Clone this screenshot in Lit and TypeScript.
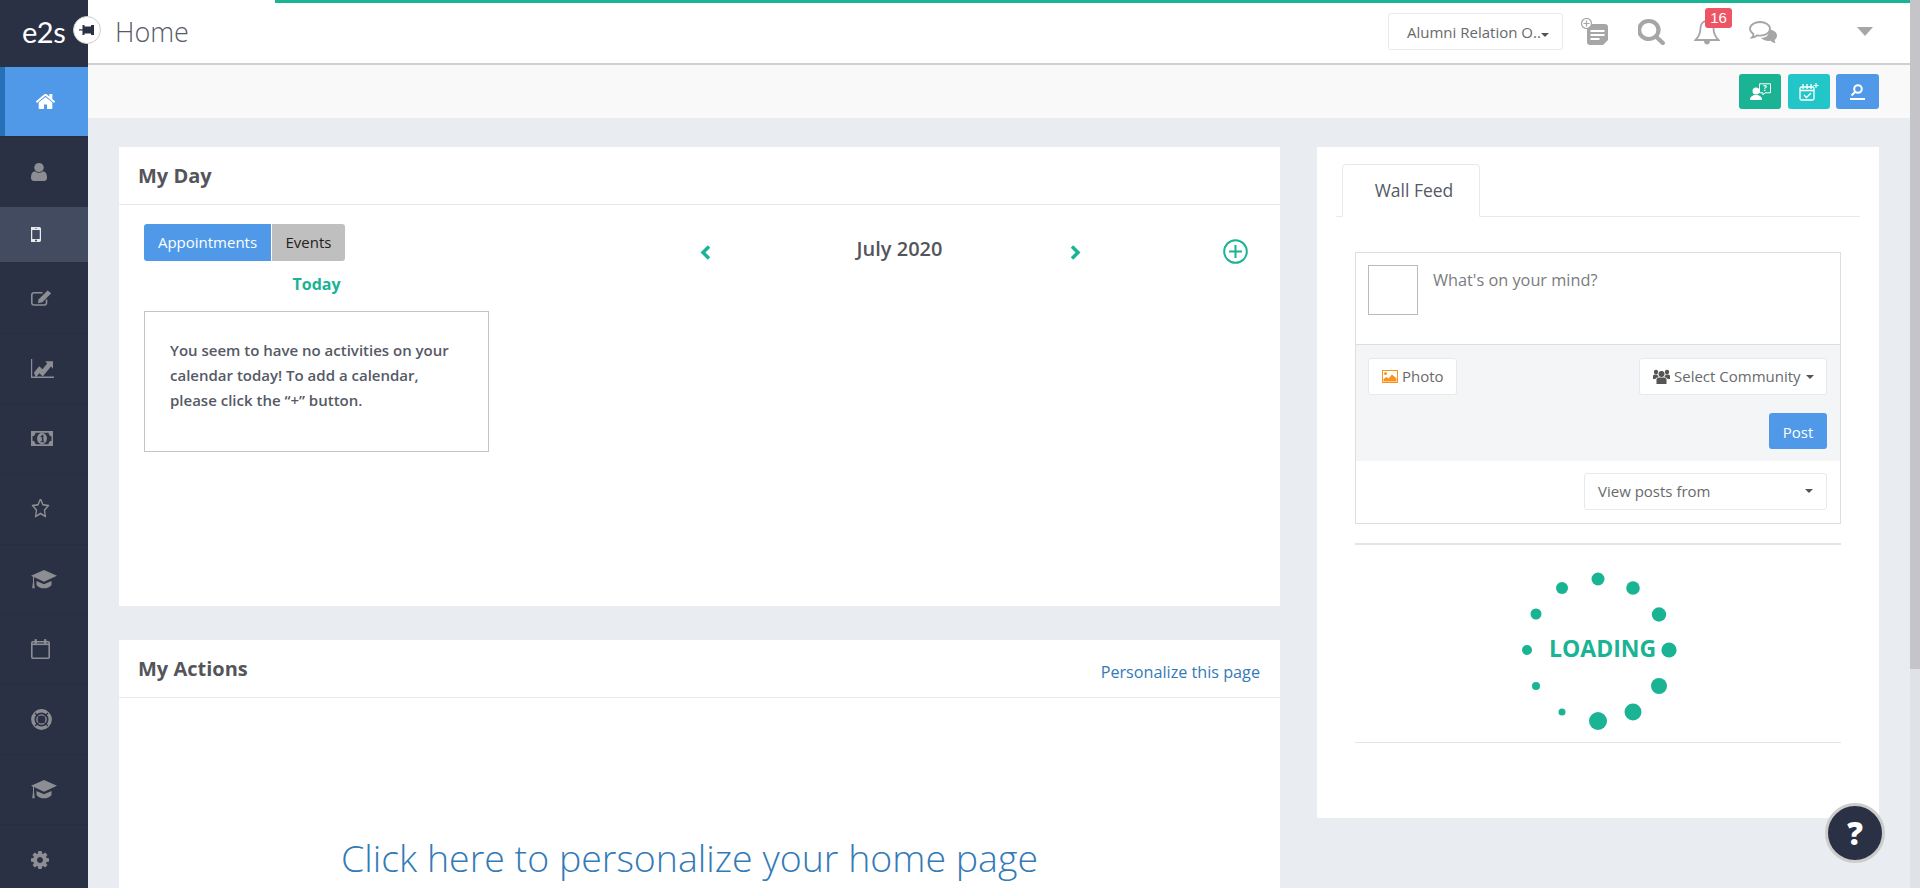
import { LitElement, html, css, svg } from "lit";
import { customElement } from "lit/decorators.js";

const fa = (d: string) => svg`<path fill="currentColor" d=${d}></path>`;
const P = {
  home: "M1472 992v480q0 26-19 45t-45 19h-384v-384h-256v384h-384q-26 0-45-19t-19-45v-480q0-1 .5-3t.5-3l575-474 575 474q1 2 1 6zm223-69l-62 74q-8 9-21 11h-3q-13 0-21-7l-692-577-692 577q-12 8-24 7-13-2-21-11l-62-74q-8-10-7-23.5t11-21.5l719-599q32-26 76-26t76 26l244 204v-195q0-14 9-23t23-9h192q14 0 23 9t9 23v408l219 182q10 8 11 21.5t-7 23.5z",
  user: "M1536 1399q0 109-62.5 187t-150.5 78h-854q-88 0-150.5-78t-62.5-187q0-85 8.5-160.5t31.5-152 58.5-131 94-89 134.5-34.5q131 128 313 128t313-128q76 0 134.5 34.5t94 89 58.5 131 31.5 152 8.5 160.5zm-256-887q0 159-112.5 271.5t-271.5 112.5-271.5-112.5-112.5-271.5 112.5-271.5 271.5-112.5 271.5 112.5 112.5 271.5z",
  mobile: "M976 1408q0-33-23.5-56.5t-56.5-23.5-56.5 23.5-23.5 56.5 23.5 56.5 56.5 23.5 56.5-23.5 23.5-56.5zm208-160v-704q0-13-9.5-22.5t-22.5-9.5h-512q-13 0-22.5 9.5t-9.5 22.5v704q0 13 9.5 22.5t22.5 9.5h512q13 0 22.5-9.5t9.5-22.5zm-192-848q0-16-16-16h-160q-16 0-16 16t16 16h160q16 0 16-16zm288-16v1024q0 52-38 90t-90 38h-640q-52 0-90-38t-38-90v-1024q0-52 38-90t90-38h640q52 0 90 38t38 90z",
  star: "M1201 1004l306-297-422-62-189-382-189 382-422 62 306 297-73 421 378-199 377 199zm527-357q0 22-26 48l-363 354 86 500q1 7 1 20 0 50-41 50-19 0-40-12l-449-236-449 236q-22 12-40 12-21 0-31.5-14.5t-10.5-35.5q0-6 2-20l86-500-364-354q-25-27-25-48 0-37 56-46l502-73 225-455q19-41 49-41t49 41l225 455 502 73q56 9 56 46z",
  cog: "M1152 896q0-106-75-181t-181-75-181 75-75 181 75 181 181 75 181-75 75-181zm512-109v222q0 12-8 23t-20 13l-185 28q-19 54-39 91 35 50 107 138 10 12 10 25t-9 23q-27 37-99 108t-94 71q-12 0-26-9l-138-108q-44 23-91 38-16 136-29 186-7 28-36 28h-222q-14 0-24.5-8.5t-11.5-21.5l-28-184q-49-16-90-37l-141 107q-10 9-25 9-14 0-25-11-126-114-165-168-7-10-7-23 0-12 8-23 15-21 51-66.5t54-70.5q-27-50-41-99l-183-27q-13-2-21-12.5t-8-23.5v-222q0-12 8-23t19-13l186-28q14-46 39-92-40-57-107-138-10-12-10-24 0-10 9-23 26-36 98.5-107.5t94.5-71.5q13 0 26 10l138 107q44-23 91-38 16-136 29-186 7-28 36-28h222q14 0 24.5 8.5t11.5 21.5l28 184q49 16 90 37l142-107q9-9 24-9 13 0 25 10 129 119 165 170 7 8 7 22 0 12-8 23-15 21-51 66.5t-54 70.5q26 50 41 98l183 28q13 2 21 12.5t8 23.5z",
  search: "M1216 832q0-185-131.5-316.5t-316.5-131.5-316.5 131.5-131.5 316.5 131.5 316.5 316.5 131.5 316.5-131.5 131.5-316.5zm512 832q0 52-38 90t-90 38q-54 0-90-38l-343-342q-179 124-399 124-143 0-273.5-55.5t-225-150-150-225-55.5-273.5 55.5-273.5 150-225 225-150 273.5-55.5 273.5 55.5 225 150 150 225 55.5 273.5q0 220-124 399l343 343q37 37 37 90z",
};
const capIcon = svg`<path fill="currentColor" d="M0 5.600 13 1l13 4.600-13 4.600L3 6.600v3.600l.8 5.200H1.200L2 10.200V6.300z"/><path fill="currentColor" d="M5.500 9.600 13 12.200l7.500-2.600v3.200c-1.700 1.800-4.400 2.700-7.500 2.700s-5.800-.9-7.500-2.700z"/>`;

const navIcons = [
  html`<svg width="19" height="15" viewBox="96 270 1600 1262" preserveAspectRatio="none">${fa(P.home)}</svg>`,
  html`<svg width="16" height="18" viewBox="256 128 1280 1536" preserveAspectRatio="none">${fa(P.user)}</svg>`,
  html`<svg width="10" height="15" viewBox="512 256 768 1280" preserveAspectRatio="none">${fa(P.mobile)}</svg>`,
  html`<svg width="21" height="16" viewBox="0 0 21 17" preserveAspectRatio="none"><path fill="none" stroke="currentColor" stroke-width="1.600" d="M15.500 10v3.600c0 1.400-.9 2.400-2.300 2.400H3.200C1.800 16 .8 15 .8 13.600V5.400C.8 4 1.800 3 3.200 3h8.300"/><path fill="currentColor" d="M16.600.4l3.600 3.100L11.400 13l-4.600 1.200.9-4.300z"/></svg>`,
  html`<svg width="23" height="19" viewBox="0 0 23 16" preserveAspectRatio="none"><path fill="currentColor" d="M0 0h1.200v14.800H23V16H0z"/><path fill="currentColor" d="M3 11.400 8.200 6l3.300 2.700 4.700-4.900-1.900-1.900H22v6.400l-2-2-8.300 8.400-3.300-2.800-3.600 3.700z"/></svg>`,
  html`<svg width="22" height="15" viewBox="0 0 22 13" preserveAspectRatio="none"><path fill="currentColor" fill-rule="evenodd" d="M0 0h22v13H0zM4.500 1.500c0 1.600-1.400 3-3 3v4c1.600 0 3 1.400 3 3h13c0-1.600 1.400-3 3-3v-4c-1.600 0-3-1.400-3-3z"/><circle cx="11" cy="6.500" r="4.900" fill="currentColor"/><path fill="#2b3144" d="M9.400 4.800 11.500 3.300h.9v5.500h1v1H9.600v-1h1.200V4.900l-1 .7z"/></svg>`,
  html`<svg width="19" height="19" viewBox="0 128 1792 1536" preserveAspectRatio="none">${fa(P.star)}</svg>`,
  html`<svg width="26" height="19" viewBox="0 1 26 15" preserveAspectRatio="none">${capIcon}</svg>`,
  html`<svg width="19" height="20" viewBox="0 0 19 20"><rect x=".8" y="2.800" width="17.400" height="16.400" rx="1" fill="none" stroke="currentColor" stroke-width="1.600"/><rect x="3.500" width="2.400" height="5" rx="1" fill="currentColor"/><rect x="13" width="2.400" height="5" rx="1" fill="currentColor"/><rect x="1" y="4.500" width="17" height="1.600" fill="currentColor"/></svg>`,
  html`<svg width="21" height="21" viewBox="0 0 21 21"><circle cx="10.500" cy="10.500" r="8.700" fill="none" stroke="currentColor" stroke-width="3.400"/><circle cx="10.500" cy="10.500" r="4.600" fill="none" stroke="currentColor" stroke-width="1.400"/><path stroke="#2b3144" stroke-width="1.200" d="M4 4l3.500 3.500M17 4l-3.500 3.500M4 17l3.500-3.500M17 17l-3.500-3.500"/></svg>`,
  html`<svg width="26" height="19" viewBox="0 1 26 15" preserveAspectRatio="none">${capIcon}</svg>`,
  html`<svg width="18" height="18" viewBox="128 128 1536 1536">${fa(P.cog)}</svg>`,
];

const dots: [number, number, number][] = [
  [70, 34, 6.5], [105, 43, 6.8], [131, 69.5, 7.2], [141, 105, 7.6], [131, 141, 8], [105, 167, 8.5],
  [70, 176, 9], [34, 167, 3.5], [8, 141, 4], [-1, 105, 5], [8, 69, 5.5], [34, 43, 6],
];

@customElement("app-root")
export class AppRoot extends LitElement {
  static styles = css`
    :host { display: block; height: 888px; overflow: hidden; font-family: "Open Sans", "Liberation Sans", sans-serif; color: #676a6c; }
    * { box-sizing: border-box; }
    .shell { display: flex; height: 888px; background: #e9ecf1; }
    .side { width: 88px; flex: none; background: #2b3144; color: #8c8e93; position: relative; z-index: 2; }
    .logo { height: 67px; padding: 14px 0 0 22px; color: #fff; font: 400 29px/36px Lato, "Open Sans", sans-serif; letter-spacing: -0.5px; }
    .pin { position: absolute; left: 73px; top: 16px; width: 28px; height: 28px; border-radius: 50%; background: #fff; border: 1px solid #ccc; display: flex; align-items: center; justify-content: center; color: #2b3144; }
    .items { display: grid; grid-template-rows: 69px 71px 55px 71px repeat(8, 70.2px); }
    .item { display: flex; align-items: center; padding-left: 31px; border-top: 1px solid #282d3f; }
    .item.active { background: #4f99e8; color: #fff; border-left: 5px solid #2670b8; border-top: none; padding-left: 31px; }
    .item.hi { background: #434b60; border-top: none; color: #e8e9ec; }
    .main { flex: 1; min-width: 0; display: flex; flex-direction: column; }
    .top { background: #fff; }
    .bar { height: 3px; margin-left: 187px; background: #1ab394; }
    .head { height: 60px; background: #fff; display: flex; align-items: center; padding-left: 27px; padding-right: 37px; color: #a6a6a6; }
    .head-border { height: 2px; background: #cfd0d2; }
    .title { font-size: 27px; font-weight: 300; color: #555a66; line-height: 36px; margin-right: auto; margin-top: -3px; }
    .org { position: relative; width: 175px; height: 37px; margin-top: -3px; border: 1px solid #e7eaec; border-radius: 3px; font-size: 15px; color: #676a6c; display: flex; align-items: center; padding-left: 18px; white-space: nowrap; }
    .caret-s { flex: none; width: 0; height: 0; border-left: 4.500px solid transparent; border-right: 4.500px solid transparent; border-top: 4.500px solid #555; }
    .org .caret-s { position: absolute; left: 152px; top: 19px; }
    .h-ic { flex: none; margin-top: -3px; }
    .ml18 { margin-left: 18px; } .ml30 { margin-left: 30px; } .ml29 { margin-left: 29px; } .ml79 { margin-left: 79px; }
    .bell { position: relative; display: flex; }
    .badge { position: absolute; left: 11px; top: -11px; width: 27px; height: 20px; border-radius: 3px; background: #ed5565; color: #fff; font: 400 15px/20px "Liberation Sans", sans-serif; text-align: center; }
    .sub { height: 53px; background: #f9f9f9; display: flex; align-items: center; justify-content: flex-end; gap: 7px; padding-right: 31px; }
    .abtn { width: 42px; height: 35px; border-radius: 3px; display: flex; align-items: center; justify-content: center; color: #fff; }
    .a1 { background: #1ab394; } .a2 { background: #23c6c8; } .a3 { background: #4f99e8; width: 43px; margin-left: -1px; }
    .content { flex: 1; display: flex; gap: 37px; padding: 29px 0 0 31px; min-height: 0; overflow: hidden; }
    .left { width: 1161px; flex: none; display: flex; flex-direction: column; gap: 34px; }
    .right { width: 562px; flex: none; }
    .card { background: #fff; }
    .card-h { height: 58px; border-bottom: 1px solid #e7eaec; padding: 0 20px 0 19px; display: flex; align-items: center; justify-content: space-between; font-size: 20px; font-weight: 700; color: #54555b; }
    .card-h a { font-size: 16.200px; font-weight: 400; color: #337ab7; padding-top: 7px; }
    .myday { height: 401px; display: flex; padding: 19px 0 0 25px; }
    .cal-l { width: 345px; flex: none; }
    .tabs { display: flex; gap: 1px; font-size: 15px; }
    .tab { height: 37px; line-height: 37px; text-align: center; }
    .t1 { width: 127px; background: #4f99e8; color: #fff; border-radius: 3px 0 0 3px; }
    .t2 { width: 73px; background: #bfbfbf; color: #222; border-radius: 0 3px 3px 0; }
    .today { text-align: center; font-size: 16px; font-weight: 700; color: #1ab394; height: 50px; line-height: 46px; width: 345px; }
    .empty { height: 141px; border: 1px solid #c4c4c4; padding: 26px 20px 0 25px; font-size: 15px; font-weight: 600; line-height: 25px; color: #555a66; }
    .nav { display: flex; align-items: flex-start; color: #1ab394; padding-top: 21px; margin-left: 211px; }
    .month { width: 359px; padding-left: 18px; text-align: center; font-size: 20px; font-weight: 600; color: #54555b; line-height: 26px; margin-top: -9px; }
    .nav .plus { margin-left: 142px; margin-top: -6px; }
    .actions { height: 300px; }
    .cta { text-align: center; font-size: 37.500px; font-weight: 300; color: #337ab7; padding: 135px 20px 0 0; line-height: 50px; }
    .wall { height: 671px; padding: 17px 19px 0 19px; }
    .wtabs { height: 53px; border-bottom: 1px solid #e7eaec; padding-left: 6px; display: flex; }
    .wtab { width: 138px; height: 53px; padding-left: 6px; border: 1px solid #e7eaec; border-bottom: 1px solid #fff; border-radius: 4px 4px 0 0; font-size: 17.500px; color: #555a66; text-align: center; line-height: 50px; }
    .post { margin: 35px 0 0 19px; width: 486px; height: 272px; border: 1px solid #dcdee0; display: flex; flex-direction: column; }
    .post-top { height: 92px; border-bottom: 1px solid #dcdee0; display: flex; padding: 12px 0 0 12px; }
    .avatar { width: 50px; height: 50px; border: 1px solid #bbb; flex: none; }
    .mind { margin-left: 15px; font-size: 16.300px; color: #7a7c80; line-height: 30px; }
    .post-mid { height: 116px; background: #f4f5f7; padding: 13px 13px 0 12px; }
    .row { display: flex; justify-content: space-between; }
    .wbtn { height: 37px; background: #fff; border: 1px solid #e7eaec; border-radius: 3px; display: flex; align-items: center; padding-bottom: 1px; font-size: 15px; color: #676a6c; }
    .photo { width: 89px; padding-left: 13px; gap: 4px; }
    .sel { width: 188px; padding-left: 13px; gap: 4px; white-space: nowrap; }
    .sel .caret-s { margin-left: 1px; margin-top: 1px; }
    .postbtn { width: 58px; height: 36px; margin: 18px 0 0 auto; background: #4f99e8; color: #fff; border-radius: 3px; font-size: 15px; text-align: center; line-height: 38px; }
    .post-bot { padding: 12px 13px 0 0; display: flex; justify-content: flex-end; }
    .view { width: 243px; padding-left: 13px; padding-right: 13px; justify-content: space-between; }
    .loading-wrap { margin: 19px 0 0 19px; width: 486px; height: 200px; border-top: 2px solid #e2e4e6; border-bottom: 1px solid #e2e4e6; }
    .loader { position: relative; width: 140px; height: 196px; margin-left: 173px; color: #1ab394; }
    .loader svg { position: absolute; left: 0; top: 0; overflow: visible; }
    .loader b { position: absolute; left: 21px; top: 88px; font-size: 23px; line-height: 30px; font-weight: 700; }
    .scroll { width: 10px; flex: none; background: #e0e2e7; }
    .thumb { height: 669px; background: #c5c5c9; }
    .help { position: absolute; left: 1825px; top: 803px; width: 60px; height: 60px; border-radius: 50%; background: #2b3144; border: 3px solid #ccc; color: #fff; font: 800 31px/54px "Open Sans", sans-serif; text-align: center; z-index: 3; }
  `;

  render() {
    return html`<div class="shell">
      <aside class="side">
        <div class="logo">e2s</div>
        <div class="pin"><svg width="16" height="10" viewBox="0 0 16 10"><path fill="currentColor" d="M0 4.300h3.500V0h2v1.500H12V0h3v10h-3V8.500H5.500V10h-2V5.500H0z"/></svg></div>
        <div class="items">
          ${navIcons.map((ic, i) => html`<div class="item ${i === 0 ? "active" : ""} ${i === 2 ? "hi" : ""}">${ic}</div>`)}
        </div>
      </aside>
      <div class="main">
        <div class="top"><div class="bar"></div></div>
        <header class="head">
          <div class="title">Home</div>
          <div class="org">Alumni Relation O..<span class="caret-s"></span></div>
          <svg class="h-ic ml18" width="27" height="27" viewBox="0 0 27 27"><path fill="currentColor" d="M6 6h18c1.500 0 3 1.300 3 3v13l-5 5H9c-1.700 0-3-1.300-3-3z"/><path stroke="#fff" stroke-width="2" d="M9.500 13h14M9.500 17h14M9.500 21h9"/><circle cx="5.500" cy="5.500" r="5" fill="#fff" stroke="currentColor" stroke-width="1.200"/><path stroke="currentColor" stroke-width="1.200" d="M5.500 2.500v6M2.500 5.500h6"/></svg>
          <svg class="h-ic ml30" width="27" height="26" viewBox="128 128 1600 1664" preserveAspectRatio="none">${fa(P.search)}</svg>
          <div class="h-ic ml29 bell">
            <svg width="26" height="26" viewBox="0 0 26 26"><path fill="none" stroke="currentColor" stroke-width="1.800" d="M13 2c-4 0-6.500 3-6.500 7 0 6-2 9-5 12h23c-3-3-5-6-5-12 0-4-2.500-7-6.500-7z"/><path fill="currentColor" d="M10 22h6c0 2-1.200 3.500-3 3.500S10 24 10 22zM11.500 0h3v3h-3z"/></svg>
            <span class="badge">16</span>
          </div>
          <svg class="h-ic ml29" width="29" height="22" viewBox="0 0 29 22"><path fill="currentColor" d="M19 8c4 .5 9 2.500 9 6.500 0 2-1 3.500-2.500 4.500l1 3c-2 0-4-1-5-2.200-4 .5-8-.8-9.500-3 6 0 9-3 7-8.800z"/><path fill="#fff" stroke="currentColor" stroke-width="1.800" d="M11 1c5.500 0 10 2.800 10 6.800s-4.500 6.800-10 6.800c-1 0-2-.1-3-.3-1.200 1.200-3 2-5 2.200 1-1 1.500-2.200 1.500-3.400C2.500 11.800 1 10 1 7.800 1 3.800 5.500 1 11 1z"/></svg>
          <svg class="h-ic ml79" width="16" height="9" viewBox="0 0 16 9"><path fill="currentColor" d="M0 0h16l-8 9z"/></svg>
        </header>
        <div class="head-border"></div>
        <div class="sub">
          <div class="abtn a1"><svg width="21" height="17" viewBox="0 0 21 17" fill="#fff"><circle cx="6" cy="8" r="3.500"/><path d="M0 17c0-3.500 2.500-5 6-5s6 1.500 6 5z"/><path fill="none" stroke="#fff" d="M9.500 .8h11v9h-5.500l-2 2v-2h-3.500z"/><text x="13" y="8" font-size="8" font-family="Open Sans" font-weight="700">?</text></svg></div>
          <div class="abtn a2"><svg width="20" height="19" viewBox="0 0 20 19" fill="none" stroke="#fff" stroke-width="1.300"><rect x="1" y="5" width="14" height="13" rx="1.500"/><path d="M1 8.500h14M4 2v5M8 2v5M12 2v5M5 13l2.500 2.500L12 11"/><path stroke-width="1.100" d="M17 1v5M14.500 3.500h5"/></svg></div>
          <div class="abtn a3"><svg width="15" height="16" viewBox="0 0 15 16" fill="none" stroke="#fff" stroke-width="2"><circle cx="8" cy="5" r="3.800"/><path d="M5 8 1.500 11.500M0 15h15"/></svg></div>
        </div>
        <div class="content">
          <div class="left">
            <section class="card">
              <div class="card-h">My Day</div>
              <div class="myday">
                <div class="cal-l">
                  <div class="tabs"><div class="tab t1">Appointments</div><div class="tab t2">Events</div></div>
                  <div class="today">Today</div>
                  <div class="empty">You seem to have no activities on your calendar today! To add a calendar, please click the “+” button.</div>
                </div>
                <div class="nav">
                  <svg width="11" height="15" viewBox="0 0 11 15"><path fill="none" stroke="currentColor" stroke-width="3.500" d="M9 1.500 3 7.500l6 6"/></svg>
                  <div class="month">July 2020</div>
                  <svg width="11" height="15" viewBox="0 0 11 15"><path fill="none" stroke="currentColor" stroke-width="3.500" d="M2 1.500l6 6-6 6"/></svg>
                  <svg class="plus" width="25" height="25" viewBox="0 0 25 25" fill="none" stroke="currentColor" stroke-width="2"><circle cx="12.500" cy="12.500" r="11.300"/><path d="M12.500 6v13M6 12.500h13"/></svg>
                </div>
              </div>
            </section>
            <section class="card actions">
              <div class="card-h">My Actions<a>Personalize this page</a></div>
              <div class="cta">Click here to personalize your home page</div>
            </section>
          </div>
          <div class="right">
            <section class="card wall">
              <div class="wtabs"><div class="wtab">Wall Feed</div></div>
              <div class="post">
                <div class="post-top"><div class="avatar"></div><div class="mind">What's on your mind?</div></div>
                <div class="post-mid">
                  <div class="row">
                    <div class="wbtn photo"><svg width="16" height="13" viewBox="0 0 16 13"><rect x=".5" y=".5" width="15" height="12" fill="#fff" stroke="#f7931e"/><circle cx="3.500" cy="3.500" r="1.500" fill="#f7931e"/><path fill="#f7931e" d="M1.500 11.500V9l3-2 2 1.500 3.500-4 4.500 4v3z"/></svg>Photo</div>
                    <div class="wbtn sel"><svg width="17" height="15" viewBox="0 0 17 15" fill="#555"><circle cx="8.500" cy="5" r="3"/><path d="M3.500 15V10.500C3.500 9 5 8.500 8.500 8.500s5 .5 5 2V15z"/><circle cx="3" cy="3" r="2.200"/><circle cx="14" cy="3" r="2.200"/><path d="M0 10V7c0-1 1-1.500 3-1.500.5 0 1 0 1.500.2.200 1 .8 2 1.500 2.300-2 .5-3.300 1-3.500 2zM17 10V7c0-1-1-1.500-3-1.500-.5 0-1 0-1.500.2-.2 1-.8 2-1.500 2.300 2 .5 3.300 1 3.500 2z"/></svg>Select Community<span class="caret-s"></span></div>
                  </div>
                  <div class="postbtn">Post</div>
                </div>
                <div class="post-bot"><div class="wbtn view">View posts from<span class="caret-s"></span></div></div>
              </div>
              <div class="loading-wrap">
                <div class="loader">
                  <svg width="140" height="196" viewBox="0 0 140 196">${dots.map(([x, y, r]) => svg`<circle cx=${x} cy=${y} r=${r} fill="currentColor"></circle>`)}</svg>
                  <b>LOADING</b>
                </div>
              </div>
            </section>
          </div>
        </div>
      </div>
      <div class="scroll"><div class="thumb"></div></div>
      <div class="help">?</div>
    </div>`;
  }
}
